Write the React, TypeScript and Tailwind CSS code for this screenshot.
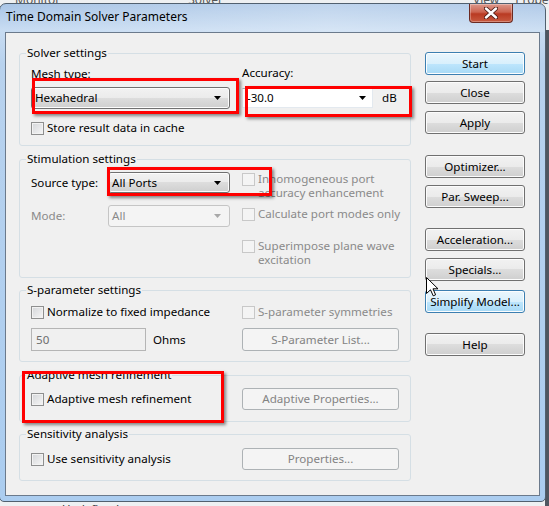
import React from "react";

const btnNormal =
  "border-[#707070] bg-[linear-gradient(#f2f2f2,#ebebeb_50%,#dddddd_50%,#cfcfcf)] shadow-[inset_0_0_0_1px_#fcfcfc]";
const btnBlue =
  "border-[#3c7fb1] bg-[linear-gradient(#eaf6fd,#d9f0fc_50%,#bee6fd_50%,#a7d9f5)] shadow-[inset_0_0_0_1px_#fcfdfe]";
const btnDisabled = "border-[#adb2b5] bg-[#f4f4f4] text-[#838383]";

function Arrow({ disabled }: { disabled?: boolean }) {
  return (
    <svg width="7" height="4" viewBox="0 0 7 4" className="shrink-0">
      <path d="M0 0 H7 L3.5 4 Z" fill={disabled ? "#a8a8a8" : "#000"} />
    </svg>
  );
}

function Box({ disabled }: { disabled?: boolean }) {
  return (
    <span
      className={`block w-[13px] h-[13px] shrink-0 border ${
        disabled
          ? "border-[#c8c8c8] bg-[#f4f4f4]"
          : "border-[#8e8f8f] bg-[linear-gradient(135deg,#d4d6d9,#f6f6f6)] shadow-[inset_0_0_0_1px_#f2f2f2]"
      }`}
    />
  );
}

function Check({ children, disabled, className = "" }: { children: React.ReactNode; disabled?: boolean; className?: string }) {
  return (
    <div className={`flex items-start gap-[3px] ${className}`}>
      <span className="pt-[1px]">
        <Box disabled={disabled} />
      </span>
      <span className={`leading-[14px] whitespace-nowrap ${disabled ? "text-[#8a8a8a]" : ""}`}>{children}</span>
    </div>
  );
}

function Btn({ children, kind = "normal", className = "" }: { children: React.ReactNode; kind?: "normal" | "blue" | "disabled"; className?: string }) {
  const k = kind === "blue" ? btnBlue : kind === "disabled" ? btnDisabled : btnNormal;
  return (
    <div className={`flex items-center justify-center rounded-[3px] border leading-[14px] ${k} ${className}`}>
      {children}
    </div>
  );
}

function Group({ title, className = "", children }: { title: string; className?: string; children: React.ReactNode }) {
  return (
    <fieldset className={`min-w-0 rounded-[3px] border border-[#d5dfe5] p-0 ${className}`}>
      <legend className="ml-[6px] px-[1px] leading-[14px]">{title}</legend>
      {children}
    </fieldset>
  );
}

function Red({ className }: { className: string }) {
  return <div className={`absolute border-[3px] border-[#ff0000] shadow-[2px_2px_3px_rgba(0,0,0,0.45)] ${className}`} />;
}

export default function App() {
  return (
    <div className="relative w-[549px] h-[506px] overflow-hidden bg-[#eef0f2] text-[11.6px] text-black font-['Noto_Sans',sans-serif]">
      {/* app behind the dialog */}
      <div className="absolute left-0 top-[-9px] flex w-full text-[12px] text-[#555]">
        <span className="ml-[15px]">Monitor</span>
        <span className="ml-[128px]">Solver</span>
        <span className="ml-[250px]">View</span>
        <span className="ml-[16px]">Prope</span>
      </div>
      <div className="absolute right-0 top-[30px] w-[4px] h-[476px] bg-[#4f5660]" />
      <div className="absolute left-[62px] top-[500px] text-[#333]">Undefined</div>

      {/* dialog window */}
      <div className="relative ml-[-1px] mt-[3px] flex h-[499px] w-[547px] flex-col rounded-t-[7px] rounded-b-[5px] border border-[#51606f] bg-[linear-gradient(180deg,#a9c5e6_0px,#c8dcf2_26px,#b8d2ee_60px,#abcdf0_100%)]">
        <div className="flex h-[28px] shrink-0 items-start justify-between bg-[linear-gradient(90deg,rgba(255,255,255,0)_0%,rgba(255,255,255,0.25)_60%,rgba(255,255,255,0.1)_100%)]">
          <div className="pl-[6px] pt-[6px] text-[12px] leading-[14px] text-black">Time Domain Solver Parameters</div>
          <div className="mr-[32px] flex h-[19px] w-[44px] items-center justify-center rounded-b-[4px] border border-t-0 border-[#6b2a22] bg-[linear-gradient(#dc988b,#cc6450_45%,#b93a22_55%,#c85a40)] shadow-[inset_0_0_0_1px_rgba(255,255,255,0.3)]">
            <svg width="14" height="12" viewBox="0 0 14 12">
              <path d="M2 1.5 L12 10.5 M12 1.5 L2 10.5" stroke="#4b1b14" strokeWidth="4.2" strokeLinecap="round" />
              <path d="M2 1.5 L12 10.5 M12 1.5 L2 10.5" stroke="#fff" strokeWidth="2.4" strokeLinecap="round" />
            </svg>
          </div>
        </div>

        <div className="mx-[5px] flex h-[464px] shrink-0 border border-[#6b7a8c] bg-[#f0f0f0] pl-[13px] pt-[13px]">
          {/* left groups */}
          <div className="flex w-[392px] flex-col">
            <Group title="Solver settings" className="h-[100px]">
              <div className="flex pl-[11px] pt-[7px]">
                <div className="w-[199px]">
                  <div className="leading-[14px]">Mesh type:</div>
                  <div className={`mt-[6px] flex h-[22px] items-center justify-between rounded-[3px] border pl-[3px] pr-[8px] ${btnNormal}`}>
                    <span>Hexahedral</span>
                    <Arrow />
                  </div>
                  <Check className="mt-[12px]">Store result data in cache</Check>
                </div>
                <div className="ml-[12px] -mt-[1px]">
                  <div className="leading-[14px]">Accuracy:</div>
                  <div className="mt-[8px] flex items-center">
                    <div className="flex h-[20px] w-[131px] items-center justify-between border border-[#e3e9ef] border-t-[#abadb3] bg-white pl-[4px] pr-[6px]">
                      <span>-30.0</span>
                      <Arrow />
                    </div>
                    <span className="ml-[9px]">dB</span>
                  </div>
                </div>
              </div>
            </Group>

            <Group title="Stimulation settings" className="mt-[6px] h-[126px]">
              <div className="flex pl-[11px] pt-[6px]">
                <div className="w-[199px]">
                  <div className="flex h-[21px] items-center">
                    <span className="w-[77px] leading-[14px]">Source type:</span>
                    <div className={`flex h-[21px] w-[122px] items-center justify-between rounded-[3px] border pl-[3px] pr-[8px] ${btnNormal}`}>
                      <span>All Ports</span>
                      <Arrow />
                    </div>
                  </div>
                  <div className="mt-[12px] flex h-[22px] items-center">
                    <span className="w-[77px] leading-[14px] text-[#8a8a8a]">Mode:</span>
                    <div className="flex h-[22px] w-[122px] items-center justify-between rounded-[3px] border border-[#c5c5c5] bg-[#f4f4f4] pl-[3px] pr-[8px] text-[#8a8a8a]">
                      <span>All</span>
                      <Arrow disabled />
                    </div>
                  </div>
                </div>
                <div className="ml-[12px] flex flex-col">
                  <Check disabled>
                    Inhomogeneous port
                    <br />
                    accuracy enhancement
                  </Check>
                  <Check disabled className="mt-[7px]">Calculate port modes only</Check>
                  <Check disabled className="mt-[18px]">
                    Superimpose plane wave
                    <br />
                    excitation
                  </Check>
                </div>
              </div>
            </Group>

            <Group title="S-parameter settings" className="mt-[5px] h-[79px]">
              <div className="pl-[11px] pt-[8px]">
                <div className="flex">
                  <Check className="w-[211px]">Normalize to fixed impedance</Check>
                  <Check disabled>S-parameter symmetries</Check>
                </div>
                <div className="mt-[9px] flex items-center">
                  <div className="flex w-[211px] items-center">
                    <div className="flex h-[23px] w-[115px] items-center border border-[#b5b5b5] bg-[#f0f0f0] pl-[4px] text-[#6d6d6d]">50</div>
                    <span className="ml-[7px]">Ohms</span>
                  </div>
                  <Btn kind="disabled" className="h-[23px] w-[157px]">S-Parameter List...</Btn>
                </div>
              </div>
            </Group>

            <Group title="Adaptive mesh refinement" className="mt-[6px] h-[54px]">
              <div className="flex items-center pl-[11px] pt-[6px]">
                <Check className="w-[211px]">Adaptive mesh refinement</Check>
                <Btn kind="disabled" className="h-[22px] w-[157px]">Adaptive Properties...</Btn>
              </div>
            </Group>

            <Group title="Sensitivity analysis" className="mt-[5px] h-[54px]">
              <div className="flex items-center pl-[11px] pt-[7px]">
                <Check className="w-[211px]">Use sensitivity analysis</Check>
                <Btn kind="disabled" className="h-[22px] w-[157px]">Properties...</Btn>
              </div>
            </Group>
          </div>

          {/* right buttons */}
          <div className="ml-[14px] flex w-[100px] flex-col">
            <Btn kind="blue" className="mt-[6px] h-[23px]">Start</Btn>
            <Btn className="mt-[6px] h-[23px]">Close</Btn>
            <Btn className="mt-[7px] h-[23px]">Apply</Btn>
            <Btn className="mt-[21px] h-[23px]">Optimizer...</Btn>
            <Btn className="mt-[7px] h-[23px]">Par. Sweep...</Btn>
            <Btn className="mt-[20px] h-[23px]">Acceleration...</Btn>
            <Btn className="mt-[7px] h-[23px]">Specials...</Btn>
            <Btn kind="blue" className="mt-[9px] h-[23px]">Simplify Model...</Btn>
            <Btn className="mt-[20px] h-[23px]">Help</Btn>
          </div>
        </div>
      </div>

      {/* annotations */}
      <Red className="left-[32px] top-[78px] h-[36px] w-[207px]" />
      <Red className="left-[245px] top-[86px] h-[31px] w-[167px]" />
      <Red className="left-[107px] top-[167px] h-[29px] w-[165px]" />
      <Red className="left-[22px] top-[371px] h-[52px] w-[202px]" />

      {/* mouse pointer */}
      <svg className="absolute left-[426px] top-[277px]" width="13" height="20" viewBox="0 0 13 20">
        <path d="M0.5 0.5 L0.5 16.5 L4.5 12.8 L7.2 18.8 L9.6 17.8 L7 11.8 L12 11.8 Z" fill="#fff" stroke="#000" strokeWidth="1" strokeLinejoin="miter" />
      </svg>
    </div>
  );
}
